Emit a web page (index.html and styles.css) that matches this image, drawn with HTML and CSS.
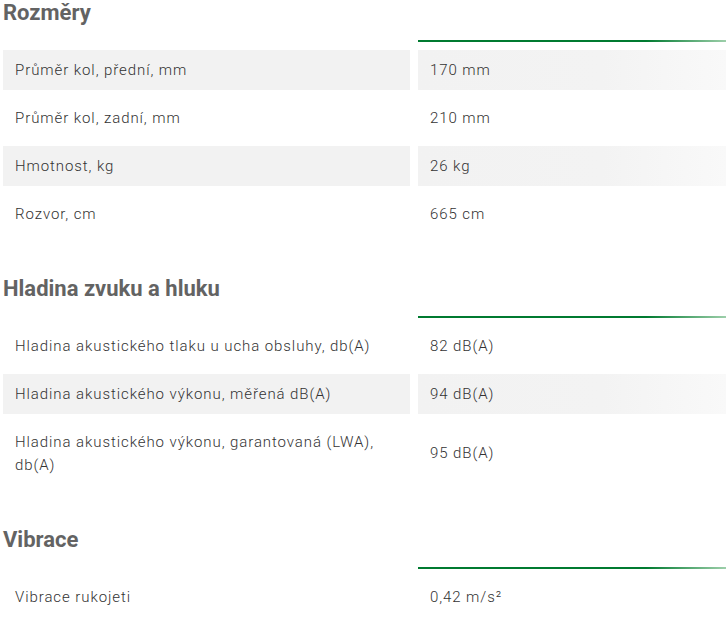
FILE: index.html
```html
<!DOCTYPE html>
<html lang="cs">
<head>
<meta charset="utf-8">
<link rel="stylesheet" href="styles.css">
</head>
<body>
<div class="specs">
  <section class="group">
    <h2 class="group-title">Rozměry</h2>
    <div class="table">
      <div class="row head"><div></div><div class="accent"></div></div>
      <div class="row alt"><div class="cell name">Průměr kol, přední, mm</div><div class="cell value">170 mm</div></div>
      <div class="row"><div class="cell name">Průměr kol, zadní, mm</div><div class="cell value">210 mm</div></div>
      <div class="row alt"><div class="cell name">Hmotnost, kg</div><div class="cell value">26 kg</div></div>
      <div class="row"><div class="cell name">Rozvor, cm</div><div class="cell value">665 cm</div></div>
    </div>
  </section>
  <section class="group">
    <h2 class="group-title">Hladina zvuku a hluku</h2>
    <div class="table">
      <div class="row head"><div></div><div class="accent"></div></div>
      <div class="row"><div class="cell name">Hladina akustického tlaku u ucha obsluhy, db(A)</div><div class="cell value">82 dB(A)</div></div>
      <div class="row alt"><div class="cell name">Hladina akustického výkonu, měřená dB(A)</div><div class="cell value">94 dB(A)</div></div>
      <div class="row"><div class="cell name">Hladina akustického výkonu, garantovaná (LWA), db(A)</div><div class="cell value">95 dB(A)</div></div>
    </div>
  </section>
  <section class="group">
    <h2 class="group-title">Vibrace</h2>
    <div class="table">
      <div class="row head"><div></div><div class="accent"></div></div>
      <div class="row"><div class="cell name">Vibrace rukojeti</div><div class="cell value">0,42 m/s²</div></div>
    </div>
  </section>
</div>
</body>
</html>
```

FILE: styles.css
```css
html, body {
  margin: 0;
  padding: 0;
  background: #ffffff;
}
body {
  font-family: Roboto, "Liberation Sans", Arial, sans-serif;
  overflow: hidden;
}
.specs {
  width: 723px;
  padding-left: 3px;
  display: flex;
  flex-direction: column;
  gap: 42px;
}
.group-title {
  margin: 0 0 14px 0;
  font-size: 22px;
  line-height: 26px;
  font-weight: 700;
  color: #636363;
}
.table {
  display: flex;
  flex-direction: column;
  gap: 8px;
}
.row {
  display: grid;
  grid-template-columns: 407px 308px;
  column-gap: 8px;
}
.row.head {
  height: 2px;
}
.accent {
  height: 2px;
  background: linear-gradient(to right, #007a30 0%, #007a30 74%, #9dcfaa 100%);
}
.cell {
  padding: 8.5px 12px;
  font-size: 15px;
  line-height: 23px;
  font-weight: 300;
  letter-spacing: 0.92px;
  color: #333333;
  display: flex;
  align-items: center;
}
.row.alt .name {
  background: #f2f2f2;
}
.row.alt .value {
  background: linear-gradient(to right, #f2f2f2 0%, #f3f3f3 60%, #f9f9f9 100%);
}
```
